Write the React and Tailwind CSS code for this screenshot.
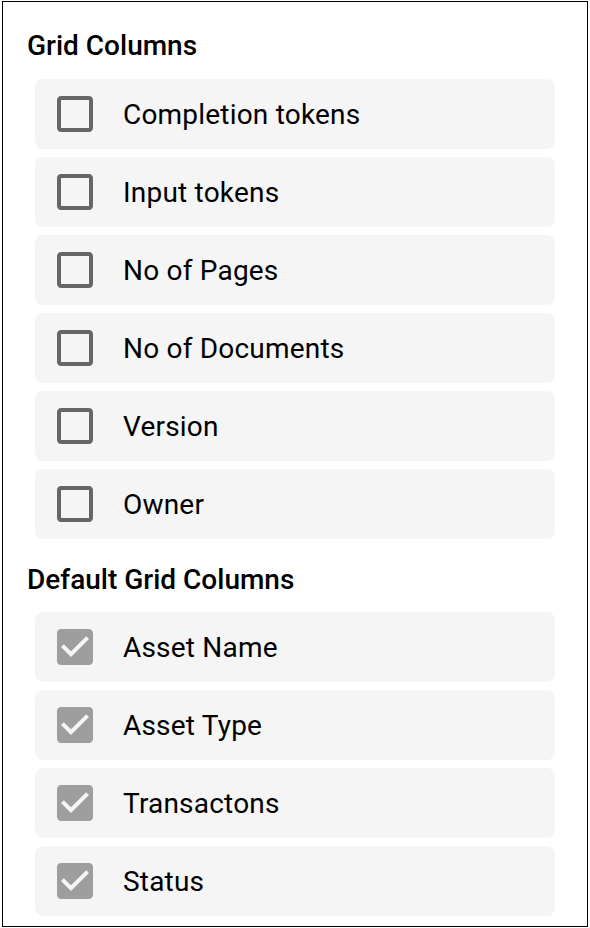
import React from 'react';

const extraColumns = ['Completion tokens', 'Input tokens', 'No of Pages', 'No of Documents', 'Version', 'Owner'];
const defaultColumns = ['Asset Name', 'Asset Type', 'Transactons', 'Status'];

function BoxIcon({ checked }) {
  if (checked) {
    return (
      <svg viewBox="0 0 24 24" className="w-12 h-12 shrink-0" fill="#9e9e9e">
        <path d="M19 3H5c-1.11 0-2 .9-2 2v14c0 1.1.89 2 2 2h14c1.1 0 2-.9 2-2V5c0-1.1-.9-2-2-2zm-9 14l-5-5 1.41-1.41L10 14.17l7.59-7.59L19 8l-9 9z" />
      </svg>
    );
  }
  return (
    <svg viewBox="0 0 24 24" className="w-12 h-12 shrink-0" fill="#666666">
      <path d="M19 5v14H5V5h14m0-2H5c-1.11 0-2 .9-2 2v14c0 1.1.89 2 2 2h14c1.1 0 2-.9 2-2V5c0-1.1-.9-2-2-2z" />
    </svg>
  );
}

function ColumnRow({ label, checked }) {
  return (
    <div className="flex items-center h-[70px] rounded-lg bg-[#f5f5f5] pl-4">
      <BoxIcon checked={checked} />
      <span className="ml-6 pt-[1px] text-[28px] leading-[32px] tracking-[0.2px] text-black">{label}</span>
    </div>
  );
}

export default function App() {
  return (
    <div className="pt-[1px] pl-[2px] bg-white" style={{ fontFamily: 'Roboto, "Noto Sans", sans-serif' }}>
      <div className="w-[586px] h-[926px] border border-black bg-white">
        <h2 className="pt-[28px] pl-[24px] text-[28px] leading-[32px] font-medium text-black">Grid Columns</h2>
        <div className="mt-[17px] mx-8 flex flex-col gap-2">
          {extraColumns.map(c => <ColumnRow key={c} label={c} />)}
        </div>
        <h2 className="mt-[25px] pl-[24px] text-[28px] leading-[32px] font-medium text-black">Default Grid Columns</h2>
        <div className="mt-[16px] mx-8 flex flex-col gap-2">
          {defaultColumns.map(c => <ColumnRow key={c} label={c} checked />)}
        </div>
      </div>
    </div>
  );
}
